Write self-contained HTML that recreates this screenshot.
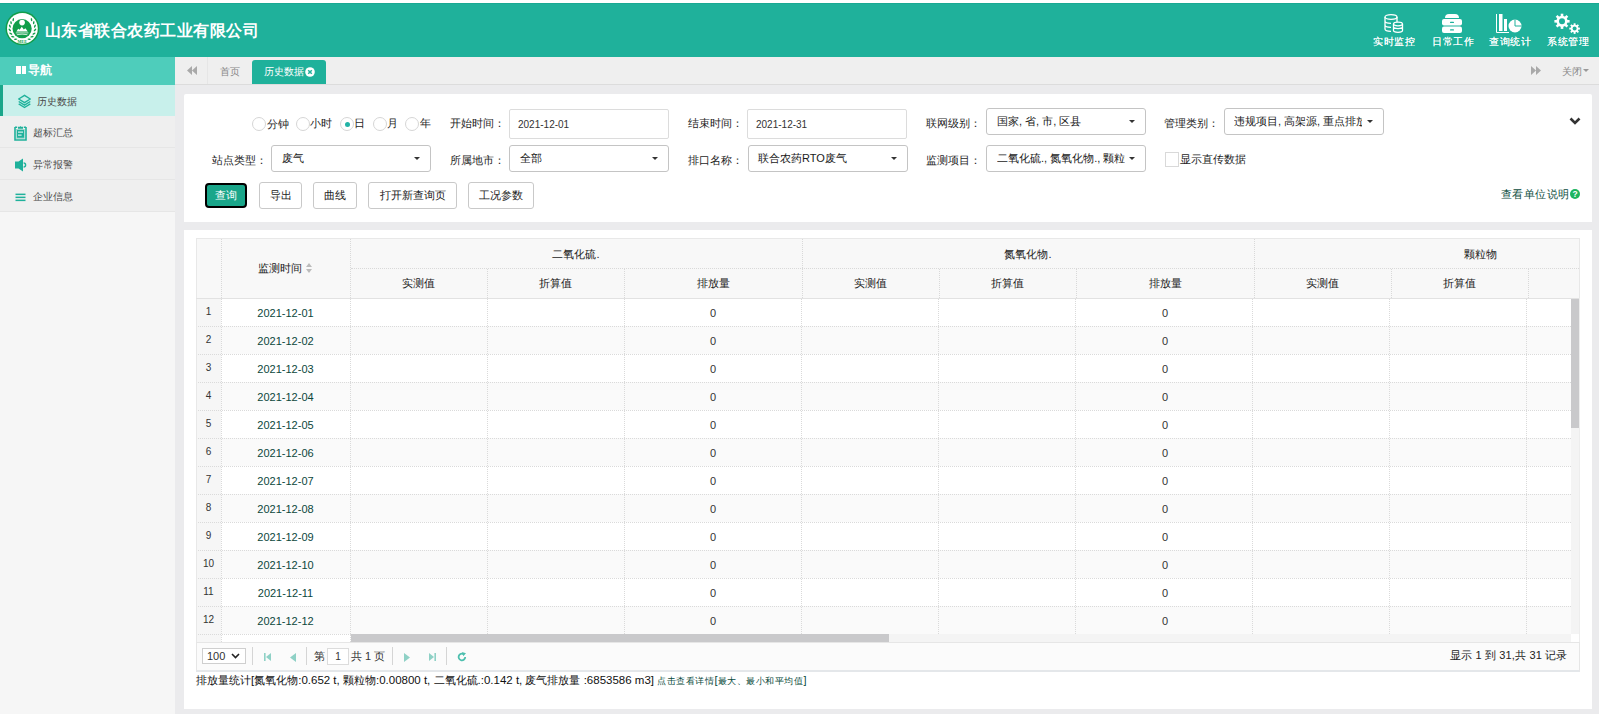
<!DOCTYPE html>
<html><head><meta charset="utf-8">
<style>
*{box-sizing:border-box;margin:0;padding:0}
html,body{width:1599px;height:714px;overflow:hidden;background:#fff;font-family:"Liberation Sans",sans-serif;font-size:12px;color:#333}
.a{position:absolute}
#hdr{left:0;top:3px;width:1599px;height:54px;background:#1fb19b;border-top:1px solid #19a993}
#title{left:44.5px;top:20.5px;font-size:16px;letter-spacing:0.5px;font-weight:bold;color:#fff;line-height:20px;white-space:nowrap}
.tb{color:#fff;font-size:10px;letter-spacing:0.5px;line-height:12px;white-space:nowrap;text-shadow:0 0 0.4px #fff}
#side{left:0;top:57px;width:175px;height:657px;background:#f6f6f6}
#navh{left:0;top:57px;width:175px;height:28px;background:#4ecdbb;color:#fff;font-weight:bold}
.item{left:0;width:175px;height:32px;background:#efefef;border-bottom:1px solid #e6e6e6;color:#555;font-size:11px}
#tabs{left:175px;top:57px;width:1424px;height:28px;background:#efefef;border-bottom:1px solid #dcdcdc}
#content{left:175px;top:85px;width:1424px;height:629px;background:#ebebed}
.panel{background:#fff;border-radius:3px}
.lbl{white-space:nowrap;font-size:11px;color:#1e1e1e;line-height:14px}
.inp{background:#fff;border:1px solid #dcdcdc;border-radius:2px}
.sel{background:#fff;border:1px solid #c4c4c4;border-radius:3px}
.selt{font-size:11px;line-height:14px;white-space:nowrap;color:#1a1a1a}
.caret{width:0;height:0;border-left:3.5px solid transparent;border-right:3.5px solid transparent;border-top:3.5px solid #333}
.btn{border:1px solid #c9c9c9;border-radius:3px;background:#fff;height:27px;text-align:center;line-height:25px;font-size:11px;color:#222}
.radio{width:14px;height:14px;border:1px solid #d6d6d6;border-radius:50%;background:#fff}
</style></head><body>

<!-- header -->
<div id="hdr" class="a"></div>
<svg class="a" style="left:5px;top:11px" width="35" height="35" viewBox="0 0 35 35">
  <circle cx="17.4" cy="17.4" r="16.9" fill="#119d4a"/>
  <circle cx="17.4" cy="17.4" r="15.4" fill="#fff"/>
  <ellipse cx="10.67" cy="28.17" rx="1.7" ry="0.75" transform="rotate(177.0 10.67 28.17)" fill="#119d4a"/><ellipse cx="7.82" cy="25.73" rx="1.7" ry="0.75" transform="rotate(194.0 7.82 25.73)" fill="#119d4a"/><ellipse cx="5.80" cy="22.57" rx="1.7" ry="0.75" transform="rotate(211.0 5.80 22.57)" fill="#119d4a"/><ellipse cx="4.79" cy="18.95" rx="1.7" ry="0.75" transform="rotate(228.0 4.79 18.95)" fill="#119d4a"/><ellipse cx="4.89" cy="15.19" rx="1.7" ry="0.75" transform="rotate(-115.0 4.89 15.19)" fill="#119d4a"/><ellipse cx="6.08" cy="11.63" rx="1.7" ry="0.75" transform="rotate(-98.0 6.08 11.63)" fill="#119d4a"/><ellipse cx="8.26" cy="8.58" rx="1.7" ry="0.75" transform="rotate(-81.0 8.26 8.58)" fill="#119d4a"/><ellipse cx="24.13" cy="28.17" rx="1.7" ry="0.75" transform="rotate(183.0 24.13 28.17)" fill="#119d4a"/><ellipse cx="26.98" cy="25.73" rx="1.7" ry="0.75" transform="rotate(166.0 26.98 25.73)" fill="#119d4a"/><ellipse cx="29.00" cy="22.57" rx="1.7" ry="0.75" transform="rotate(149.0 29.00 22.57)" fill="#119d4a"/><ellipse cx="30.01" cy="18.95" rx="1.7" ry="0.75" transform="rotate(132.0 30.01 18.95)" fill="#119d4a"/><ellipse cx="29.91" cy="15.19" rx="1.7" ry="0.75" transform="rotate(115.0 29.91 15.19)" fill="#119d4a"/><ellipse cx="28.72" cy="11.63" rx="1.7" ry="0.75" transform="rotate(98.0 28.72 11.63)" fill="#119d4a"/><ellipse cx="26.54" cy="8.58" rx="1.7" ry="0.75" transform="rotate(81.0 26.54 8.58)" fill="#119d4a"/>
  <circle cx="17.1" cy="17.7" r="9.6" fill="#119d4a"/>
  <circle cx="17.1" cy="11.6" r="2.8" fill="#fff"/>
  <path d="M11.4 20.4 L13.2 17.8 L14.6 18.8 L16.8 15.8 L18.8 18.4 L20.4 17.2 L22.8 20.4 Z" fill="#fff"/>
  <path d="M10.8 21.9 H23.4 M11.8 23.7 Q17.1 22.7 22.4 23.7" stroke="#fff" stroke-width="0.9" fill="none" opacity="0.85"/>
  <text x="17.3" y="31.8" font-size="4.2" fill="#119d4a" text-anchor="middle" font-weight="bold" font-family="Liberation Serif">MEE</text>
</svg>
<div id="title" class="a">山东省联合农药工业有限公司</div>

<!-- header right icons -->
<svg class="a" style="left:1384px;top:14px" width="20" height="19" viewBox="0 0 20 19">
  <g fill="none" stroke="#fff" stroke-width="1.3">
    <ellipse cx="7" cy="3" rx="6" ry="2.3"/>
    <path d="M1 3 V15 Q1 17.3 7 17.3 M1 7 Q1 9.3 7 9.3 M1 11 Q1 13.3 7 13.3 M13 3 V8"/>
    <ellipse cx="14" cy="10" rx="4.5" ry="1.8"/>
    <path d="M9.5 10 V16.5 Q9.5 18.3 14 18.3 Q18.5 18.3 18.5 16.5 V10 M9.5 12.8 Q9.5 14.6 14 14.6 Q18.5 14.6 18.5 12.8"/>
  </g>
</svg>
<div class="a tb" style="left:1373px;top:35.5px">实时监控</div>
<svg class="a" style="left:1442px;top:14px" width="20" height="19" viewBox="0 0 20 19">
  <path d="M3 4 Q3 0 7 0 H13 Q17 0 17 4 Z" fill="#fff"/>
  <rect x="0" y="5" width="20" height="6.5" rx="2" fill="#fff"/>
  <rect x="0" y="12.5" width="20" height="6.5" rx="2" fill="#fff"/>
  <rect x="8" y="7.8" width="4" height="1.2" rx="0.6" fill="#1fb19b"/>
  <rect x="8" y="15.3" width="4" height="1.2" rx="0.6" fill="#1fb19b"/>
</svg>
<div class="a tb" style="left:1432px;top:35.5px">日常工作</div>
<svg class="a" style="left:1496px;top:14px" width="26" height="19" viewBox="0 0 26 19">
  <path d="M0.5 0 V18.5 H13" stroke="#fff" stroke-width="1" fill="none"/>
  <rect x="3" y="0" width="3.5" height="17" fill="#fff"/>
  <rect x="8" y="5" width="3" height="12" fill="#fff"/>
  <circle cx="19" cy="12" r="6.5" fill="#fff"/>
  <path d="M19 5.5 V12 H25.5" stroke="#1fb19b" stroke-width="1" fill="none"/>
</svg>
<div class="a tb" style="left:1489px;top:35.5px">查询统计</div>
<svg class="a" style="left:1554px;top:13px" width="28" height="21" viewBox="0 0 28 21"><circle cx="8" cy="8.3" r="5.6" fill="#fff"/><rect x="6.7" y="0.7000000000000011" width="2.6" height="7.6" fill="#fff" transform="rotate(0.0 8 8.3)"/><rect x="6.7" y="0.7000000000000011" width="2.6" height="7.6" fill="#fff" transform="rotate(45.0 8 8.3)"/><rect x="6.7" y="0.7000000000000011" width="2.6" height="7.6" fill="#fff" transform="rotate(90.0 8 8.3)"/><rect x="6.7" y="0.7000000000000011" width="2.6" height="7.6" fill="#fff" transform="rotate(135.0 8 8.3)"/><rect x="6.7" y="0.7000000000000011" width="2.6" height="7.6" fill="#fff" transform="rotate(180.0 8 8.3)"/><rect x="6.7" y="0.7000000000000011" width="2.6" height="7.6" fill="#fff" transform="rotate(225.0 8 8.3)"/><rect x="6.7" y="0.7000000000000011" width="2.6" height="7.6" fill="#fff" transform="rotate(270.0 8 8.3)"/><rect x="6.7" y="0.7000000000000011" width="2.6" height="7.6" fill="#fff" transform="rotate(315.0 8 8.3)"/><circle cx="8" cy="8.3" r="3.0" fill="#1fb19b"/><circle cx="20.6" cy="15.6" r="3.8" fill="#fff"/><rect x="19.650000000000002" y="10.3" width="1.9" height="5.3" fill="#fff" transform="rotate(0.0 20.6 15.6)"/><rect x="19.650000000000002" y="10.3" width="1.9" height="5.3" fill="#fff" transform="rotate(45.0 20.6 15.6)"/><rect x="19.650000000000002" y="10.3" width="1.9" height="5.3" fill="#fff" transform="rotate(90.0 20.6 15.6)"/><rect x="19.650000000000002" y="10.3" width="1.9" height="5.3" fill="#fff" transform="rotate(135.0 20.6 15.6)"/><rect x="19.650000000000002" y="10.3" width="1.9" height="5.3" fill="#fff" transform="rotate(180.0 20.6 15.6)"/><rect x="19.650000000000002" y="10.3" width="1.9" height="5.3" fill="#fff" transform="rotate(225.0 20.6 15.6)"/><rect x="19.650000000000002" y="10.3" width="1.9" height="5.3" fill="#fff" transform="rotate(270.0 20.6 15.6)"/><rect x="19.650000000000002" y="10.3" width="1.9" height="5.3" fill="#fff" transform="rotate(315.0 20.6 15.6)"/><circle cx="20.6" cy="15.6" r="2.0" fill="#1fb19b"/></svg>
<div class="a tb" style="left:1547px;top:35.5px">系统管理</div>

<!-- sidebar -->
<div id="side" class="a"></div>
<div id="navh" class="a"><div class="a" style="left:16px;top:9px;width:5px;height:8px;background:#fff"></div><div class="a" style="left:21.5px;top:9px;width:4.5px;height:8px;background:#fff"></div><div class="a" style="left:28px;top:6px;font-size:12px;line-height:14px">导航</div></div>
<div class="a item" style="top:85px;height:31px;background:#c8f0eb;border-bottom:none;border-left:3px solid #1aa68a"></div>
<div class="a" style="left:37px;top:95px;font-size:10px;color:#4a4a4a;line-height:14px">历史数据</div>
<div class="a item" style="top:116px"></div>
<div class="a" style="left:33px;top:126px;font-size:10px;color:#4a4a4a;line-height:14px">超标汇总</div>
<div class="a item" style="top:148px"></div>
<div class="a" style="left:33px;top:158px;font-size:10px;color:#4a4a4a;line-height:14px">异常报警</div>
<div class="a item" style="top:180px"></div>
<div class="a" style="left:33px;top:190px;font-size:10px;color:#4a4a4a;line-height:14px">企业信息</div>

<svg class="a" style="left:17px;top:94px" width="15" height="15" viewBox="0 0 15 15"><g fill="none" stroke="#1fb19b" stroke-width="1.4" stroke-linejoin="round"><path d="M7.5 1.3 L13.3 5 L7.5 8.7 L1.7 5 Z"/><path d="M1.7 7.5 L7.5 11.2 L13.3 7.5"/><path d="M1.7 9.8 L7.5 13.5 L13.3 9.8"/></g></svg>
<svg class="a" style="left:14px;top:126px" width="13" height="15" viewBox="0 0 13 15"><path d="M1 1.3 H3.2 M9.8 1.3 H12 M1 1 V14 H12 V1" fill="none" stroke="#1fb19b" stroke-width="1.6"/><path d="M4 0.8 H9 V2.8 H4 Z M6.5 0 L7.3 1 H5.7 Z" fill="#1fb19b"/><rect x="3" y="3.8" width="7" height="8" fill="#1fb19b"/><rect x="2.6" y="3.4" width="7.8" height="9" fill="none" stroke="#7ccfc1" stroke-width="0.6"/><rect x="4" y="5.6" width="5" height="1" fill="#fff"/><rect x="4" y="8.6" width="3.6" height="1" fill="#fff"/></svg>
<svg class="a" style="left:15px;top:158px" width="12" height="14" viewBox="0 0 12 14"><path d="M0 3.5 H3.5 L8 0.5 V13.5 L3.5 10.5 H0 Z" fill="#1fb19b"/><path d="M8.6 5 A2 2 0 0 1 8.6 9" fill="none" stroke="#1fb19b" stroke-width="1.4"/></svg>
<svg class="a" style="left:15px;top:193px" width="11" height="9" viewBox="0 0 11 9"><rect x="0.5" y="0.6" width="10" height="1.5" fill="#1fb19b"/><rect x="0.5" y="3.6" width="10" height="1.5" fill="#1fb19b"/><rect x="0.5" y="6.6" width="10" height="1.5" fill="#1fb19b"/></svg>
<!-- tabs -->
<div id="tabs" class="a"></div>
<div class="a" style="left:207px;top:57px;width:1px;height:27px;background:#e6e6e6"></div>
<svg class="a" style="left:187px;top:66px" width="10" height="9" viewBox="0 0 10 9"><path d="M5 0 L0 4.5 L5 9 Z M10 0 L5 4.5 L10 9 Z" fill="#a9a9a9"/></svg>
<div class="a" style="left:220px;top:65px;font-size:10px;line-height:13px;color:#888">首页</div>
<div class="a" style="left:252px;top:60px;width:74px;height:24px;background:#1fb19b;border-radius:3px 3px 0 0"></div>
<div class="a" style="left:264px;top:65px;font-size:10px;line-height:13px;color:#fff">历史数据</div>
<svg class="a" style="left:305px;top:66.5px" width="10" height="10" viewBox="0 0 10 10"><circle cx="5" cy="5" r="4.8" fill="#fff"/><path d="M3.2 3.2 L6.8 6.8 M6.8 3.2 L3.2 6.8" stroke="#1fb19b" stroke-width="1.5"/></svg>
<svg class="a" style="left:1531px;top:66px" width="10" height="9" viewBox="0 0 10 9"><path d="M0 0 L5 4.5 L0 9 Z M5 0 L10 4.5 L5 9 Z" fill="#a9a9a9"/></svg>
<div class="a" style="left:1562px;top:64.5px;font-size:10px;line-height:13px;color:#888">关闭</div>
<div class="a caret" style="left:1583px;top:69px;border-top-color:#999;border-left-width:3.5px;border-right-width:3.5px"></div>
<div id="content" class="a"></div>

<!-- panel 1 -->
<div class="a panel" style="left:184px;top:94px;width:1408px;height:128px;border-radius:2px 2px 0 0"></div>
<div class="a radio" style="left:252px;top:117px"></div>
<div class="a lbl" style="left:267px;top:116.5px">分钟</div>
<div class="a radio" style="left:296px;top:117px"></div>
<div class="a lbl" style="left:310px;top:116px">小时</div>
<div class="a radio" style="left:340px;top:117px"></div>
<div class="a" style="left:344.5px;top:121.5px;width:5px;height:5px;border-radius:50%;background:#22b3a6"></div>
<div class="a lbl" style="left:354px;top:116px">日</div>
<div class="a radio" style="left:373px;top:117px"></div>
<div class="a lbl" style="left:387px;top:116px">月</div>
<div class="a radio" style="left:405px;top:117px"></div>
<div class="a lbl" style="left:420px;top:116px">年</div>

<div class="a lbl" style="left:450px;top:116px">开始时间：</div>
<div class="a inp" style="left:509px;top:109px;width:160px;height:30px"></div>
<div class="a" style="left:518px;top:118px;font-size:10px;line-height:13px;color:#333">2021-12-01</div>
<div class="a lbl" style="left:688px;top:116px">结束时间：</div>
<div class="a inp" style="left:747px;top:109px;width:160px;height:30px"></div>
<div class="a" style="left:756px;top:118px;font-size:10px;line-height:13px;color:#333">2021-12-31</div>
<div class="a lbl" style="left:926px;top:116px">联网级别：</div>
<div class="a sel" style="left:986px;top:108px;width:160px;height:27px"></div>
<div class="a selt" style="left:997px;top:114px">国家, 省, 市, 区县</div>
<div class="a caret" style="left:1129px;top:120px"></div>
<div class="a lbl" style="left:1164px;top:116px">管理类别：</div>
<div class="a sel" style="left:1224px;top:108px;width:160px;height:27px"></div>
<div class="a selt" style="left:1234px;top:114px;width:128px;overflow:hidden">违规项目, 高架源, 重点排放</div>
<div class="a caret" style="left:1367px;top:120px"></div>
<svg class="a" style="left:1569px;top:116.5px" width="12" height="9" viewBox="0 0 12 9"><path d="M1.5 1.5 L6 6 L10.5 1.5" stroke="#333" stroke-width="2.6" fill="none"/></svg>

<div class="a lbl" style="left:212px;top:153px">站点类型：</div>
<div class="a sel" style="left:271px;top:145px;width:160px;height:27px"></div>
<div class="a selt" style="left:282px;top:151px">废气</div>
<div class="a caret" style="left:414px;top:157px"></div>
<div class="a lbl" style="left:450px;top:153px">所属地市：</div>
<div class="a sel" style="left:509px;top:145px;width:160px;height:27px"></div>
<div class="a selt" style="left:520px;top:151px">全部</div>
<div class="a caret" style="left:652px;top:157px"></div>
<div class="a lbl" style="left:688px;top:153px">排口名称：</div>
<div class="a sel" style="left:748px;top:145px;width:160px;height:27px"></div>
<div class="a selt" style="left:758px;top:151px">联合农药RTO废气</div>
<div class="a caret" style="left:891px;top:157px"></div>
<div class="a lbl" style="left:926px;top:153px">监测项目：</div>
<div class="a sel" style="left:986px;top:145px;width:160px;height:27px"></div>
<div class="a selt" style="left:997px;top:151px;width:128px;overflow:hidden">二氧化硫., 氮氧化物., 颗粒物</div>
<div class="a caret" style="left:1129px;top:157px"></div>
<div class="a" style="left:1165px;top:152px;width:14px;height:15px;border:1px solid #d9d9d9;background:#fff"></div>
<div class="a lbl" style="left:1179.5px;top:151.5px;font-size:11.2px;letter-spacing:0.2px">显示直传数据</div>

<div class="a" style="left:205px;top:183px;width:42px;height:25px;border:2px solid #000;border-radius:4px;background:#1aa68a;color:#fff;font-size:11px;line-height:21px;text-align:center">查询</div>
<div class="a btn" style="left:259px;top:182px;width:43px">导出</div>
<div class="a btn" style="left:313px;top:182px;width:44px">曲线</div>
<div class="a btn" style="left:368px;top:182px;width:89px">打开新查询页</div>
<div class="a btn" style="left:468px;top:182px;width:66px">工况参数</div>
<div class="a" style="left:1501px;top:186.5px;font-size:11px;letter-spacing:0.4px;line-height:14px;color:#0d4d40;white-space:nowrap">查看单位说明</div>
<svg class="a" style="left:1570px;top:189px" width="10" height="10" viewBox="0 0 10 10"><circle cx="5" cy="5" r="5" fill="#1db55e"/><text x="5" y="8.4" font-size="8.5" font-weight="bold" fill="#fff" text-anchor="middle" font-family="Liberation Sans">?</text></svg>

<!-- panel 2 -->
<div class="a panel" style="left:184px;top:230px;width:1408px;height:479px;border-radius:0"></div>
<div class="a" style="left:196px;top:238px;width:1384px;height:60px;background:#f8f8f8;border:1px solid #e8e8e8;border-bottom:none"></div>
<div class="a" style="left:221px;top:239px;width:0;height:59px;border-left:1px dotted #d9d9d9"></div>
<div class="a" style="left:350px;top:239px;width:0;height:59px;border-left:1px dotted #d9d9d9"></div>
<div class="a" style="left:802px;top:239px;width:0;height:59px;border-left:1px dotted #d9d9d9"></div>
<div class="a" style="left:1254px;top:239px;width:0;height:59px;border-left:1px dotted #d9d9d9"></div>
<div class="a" style="left:351px;top:268px;width:1228px;height:0;border-top:1px dotted #d9d9d9"></div>
<div class="a" style="left:487px;top:269px;width:0;height:29px;border-left:1px dotted #d9d9d9"></div>
<div class="a" style="left:624px;top:269px;width:0;height:29px;border-left:1px dotted #d9d9d9"></div>
<div class="a" style="left:939px;top:269px;width:0;height:29px;border-left:1px dotted #d9d9d9"></div>
<div class="a" style="left:1076px;top:269px;width:0;height:29px;border-left:1px dotted #d9d9d9"></div>
<div class="a" style="left:1391px;top:269px;width:0;height:29px;border-left:1px dotted #d9d9d9"></div>
<div class="a" style="left:1528px;top:269px;width:0;height:29px;border-left:1px dotted #d9d9d9"></div>
<div class="a" style="left:221px;top:261px;width:129px;font-size:11px;line-height:14px;color:#222;white-space:nowrap;text-align:center">监测时间 <span style="display:inline-block;width:8px"></span></div>
<svg class="a" style="left:306px;top:263px" width="6" height="10" viewBox="0 0 6 10"><path d="M3 0 L6 4 H0 Z M0 6 H6 L3 10 Z" fill="#bbb"/></svg>
<div class="a" style="left:350px;top:247px;width:452px;font-size:11px;line-height:14px;color:#222;white-space:nowrap;text-align:center">二氧化硫.</div>
<div class="a" style="left:802px;top:247px;width:452px;font-size:11px;line-height:14px;color:#222;white-space:nowrap;text-align:center">氮氧化物.</div>
<div class="a" style="left:1254px;top:247px;width:452px;font-size:11px;line-height:14px;color:#222;white-space:nowrap;text-align:center">颗粒物</div>
<div class="a" style="left:350px;top:276px;width:137px;font-size:11px;line-height:14px;color:#222;white-space:nowrap;text-align:center">实测值</div>
<div class="a" style="left:487px;top:276px;width:137px;font-size:11px;line-height:14px;color:#222;white-space:nowrap;text-align:center">折算值</div>
<div class="a" style="left:624px;top:276px;width:178px;font-size:11px;line-height:14px;color:#222;white-space:nowrap;text-align:center">排放量</div>
<div class="a" style="left:802px;top:276px;width:137px;font-size:11px;line-height:14px;color:#222;white-space:nowrap;text-align:center">实测值</div>
<div class="a" style="left:939px;top:276px;width:137px;font-size:11px;line-height:14px;color:#222;white-space:nowrap;text-align:center">折算值</div>
<div class="a" style="left:1076px;top:276px;width:178px;font-size:11px;line-height:14px;color:#222;white-space:nowrap;text-align:center">排放量</div>
<div class="a" style="left:1254px;top:276px;width:137px;font-size:11px;line-height:14px;color:#222;white-space:nowrap;text-align:center">实测值</div>
<div class="a" style="left:1391px;top:276px;width:137px;font-size:11px;line-height:14px;color:#222;white-space:nowrap;text-align:center">折算值</div>
<div class="a" style="left:196px;top:638px;width:1px;height:4px;background:#e3e3e3"></div><div class="a" style="left:196px;top:298px;width:1383px;height:344px;overflow:hidden;background:#fff">
<div class="a" style="left:0;top:0px;width:1383px;height:28px;background:#fff"></div>
<div class="a" style="left:0;top:28px;width:1383px;height:28px;background:#fafafa"></div>
<div class="a" style="left:0;top:56px;width:1383px;height:28px;background:#fff"></div>
<div class="a" style="left:0;top:84px;width:1383px;height:28px;background:#fafafa"></div>
<div class="a" style="left:0;top:112px;width:1383px;height:28px;background:#fff"></div>
<div class="a" style="left:0;top:140px;width:1383px;height:28px;background:#fafafa"></div>
<div class="a" style="left:0;top:168px;width:1383px;height:28px;background:#fff"></div>
<div class="a" style="left:0;top:196px;width:1383px;height:28px;background:#fafafa"></div>
<div class="a" style="left:0;top:224px;width:1383px;height:28px;background:#fff"></div>
<div class="a" style="left:0;top:252px;width:1383px;height:28px;background:#fafafa"></div>
<div class="a" style="left:0;top:280px;width:1383px;height:28px;background:#fff"></div>
<div class="a" style="left:0;top:308px;width:1383px;height:28px;background:#fafafa"></div>
<div class="a" style="left:0;top:336px;width:1383px;height:28px;background:#fff"></div>
<div class="a" style="left:0;top:0;width:25px;height:344px;background:#f6f6f6"></div>
<div class="a" style="left:0;top:28px;width:1375px;height:0;border-top:1px dotted #dadada"></div>
<div class="a" style="left:0;top:56px;width:1375px;height:0;border-top:1px dotted #dadada"></div>
<div class="a" style="left:0;top:84px;width:1375px;height:0;border-top:1px dotted #dadada"></div>
<div class="a" style="left:0;top:112px;width:1375px;height:0;border-top:1px dotted #dadada"></div>
<div class="a" style="left:0;top:140px;width:1375px;height:0;border-top:1px dotted #dadada"></div>
<div class="a" style="left:0;top:168px;width:1375px;height:0;border-top:1px dotted #dadada"></div>
<div class="a" style="left:0;top:196px;width:1375px;height:0;border-top:1px dotted #dadada"></div>
<div class="a" style="left:0;top:224px;width:1375px;height:0;border-top:1px dotted #dadada"></div>
<div class="a" style="left:0;top:252px;width:1375px;height:0;border-top:1px dotted #dadada"></div>
<div class="a" style="left:0;top:280px;width:1375px;height:0;border-top:1px dotted #dadada"></div>
<div class="a" style="left:0;top:308px;width:1375px;height:0;border-top:1px dotted #dadada"></div>
<div class="a" style="left:0;top:336px;width:1375px;height:0;border-top:1px dotted #dadada"></div>
<div class="a" style="left:0;top:364px;width:1375px;height:0;border-top:1px dotted #dadada"></div>
<div class="a" style="left:25px;top:0;width:0;height:344px;border-left:1px dotted #dadada"></div>
<div class="a" style="left:154px;top:0;width:0;height:344px;border-left:1px dotted #dadada"></div>
<div class="a" style="left:291px;top:0;width:0;height:344px;border-left:1px dotted #dadada"></div>
<div class="a" style="left:428px;top:0;width:0;height:344px;border-left:1px dotted #dadada"></div>
<div class="a" style="left:605px;top:0;width:0;height:344px;border-left:1px dotted #dadada"></div>
<div class="a" style="left:742px;top:0;width:0;height:344px;border-left:1px dotted #dadada"></div>
<div class="a" style="left:879px;top:0;width:0;height:344px;border-left:1px dotted #dadada"></div>
<div class="a" style="left:1056px;top:0;width:0;height:344px;border-left:1px dotted #dadada"></div>
<div class="a" style="left:1193px;top:0;width:0;height:344px;border-left:1px dotted #dadada"></div>
<div class="a" style="left:1330px;top:0;width:0;height:344px;border-left:1px dotted #dadada"></div>
<div class="a" style="left:0;top:7px;width:25px;text-align:center;font-size:10px;line-height:14px;white-space:nowrap;color:#333">1</div>
<div class="a" style="left:25px;top:8px;width:129px;text-align:center;font-size:11px;line-height:14px;white-space:nowrap;color:#0b473c">2021-12-01</div>
<div class="a" style="left:428px;top:8px;width:178px;text-align:center;font-size:11px;line-height:14px;white-space:nowrap;color:#333">0</div>
<div class="a" style="left:880px;top:8px;width:178px;text-align:center;font-size:11px;line-height:14px;white-space:nowrap;color:#333">0</div>
<div class="a" style="left:0;top:35px;width:25px;text-align:center;font-size:10px;line-height:14px;white-space:nowrap;color:#333">2</div>
<div class="a" style="left:25px;top:36px;width:129px;text-align:center;font-size:11px;line-height:14px;white-space:nowrap;color:#0b473c">2021-12-02</div>
<div class="a" style="left:428px;top:36px;width:178px;text-align:center;font-size:11px;line-height:14px;white-space:nowrap;color:#333">0</div>
<div class="a" style="left:880px;top:36px;width:178px;text-align:center;font-size:11px;line-height:14px;white-space:nowrap;color:#333">0</div>
<div class="a" style="left:0;top:63px;width:25px;text-align:center;font-size:10px;line-height:14px;white-space:nowrap;color:#333">3</div>
<div class="a" style="left:25px;top:64px;width:129px;text-align:center;font-size:11px;line-height:14px;white-space:nowrap;color:#0b473c">2021-12-03</div>
<div class="a" style="left:428px;top:64px;width:178px;text-align:center;font-size:11px;line-height:14px;white-space:nowrap;color:#333">0</div>
<div class="a" style="left:880px;top:64px;width:178px;text-align:center;font-size:11px;line-height:14px;white-space:nowrap;color:#333">0</div>
<div class="a" style="left:0;top:91px;width:25px;text-align:center;font-size:10px;line-height:14px;white-space:nowrap;color:#333">4</div>
<div class="a" style="left:25px;top:92px;width:129px;text-align:center;font-size:11px;line-height:14px;white-space:nowrap;color:#0b473c">2021-12-04</div>
<div class="a" style="left:428px;top:92px;width:178px;text-align:center;font-size:11px;line-height:14px;white-space:nowrap;color:#333">0</div>
<div class="a" style="left:880px;top:92px;width:178px;text-align:center;font-size:11px;line-height:14px;white-space:nowrap;color:#333">0</div>
<div class="a" style="left:0;top:119px;width:25px;text-align:center;font-size:10px;line-height:14px;white-space:nowrap;color:#333">5</div>
<div class="a" style="left:25px;top:120px;width:129px;text-align:center;font-size:11px;line-height:14px;white-space:nowrap;color:#0b473c">2021-12-05</div>
<div class="a" style="left:428px;top:120px;width:178px;text-align:center;font-size:11px;line-height:14px;white-space:nowrap;color:#333">0</div>
<div class="a" style="left:880px;top:120px;width:178px;text-align:center;font-size:11px;line-height:14px;white-space:nowrap;color:#333">0</div>
<div class="a" style="left:0;top:147px;width:25px;text-align:center;font-size:10px;line-height:14px;white-space:nowrap;color:#333">6</div>
<div class="a" style="left:25px;top:148px;width:129px;text-align:center;font-size:11px;line-height:14px;white-space:nowrap;color:#0b473c">2021-12-06</div>
<div class="a" style="left:428px;top:148px;width:178px;text-align:center;font-size:11px;line-height:14px;white-space:nowrap;color:#333">0</div>
<div class="a" style="left:880px;top:148px;width:178px;text-align:center;font-size:11px;line-height:14px;white-space:nowrap;color:#333">0</div>
<div class="a" style="left:0;top:175px;width:25px;text-align:center;font-size:10px;line-height:14px;white-space:nowrap;color:#333">7</div>
<div class="a" style="left:25px;top:176px;width:129px;text-align:center;font-size:11px;line-height:14px;white-space:nowrap;color:#0b473c">2021-12-07</div>
<div class="a" style="left:428px;top:176px;width:178px;text-align:center;font-size:11px;line-height:14px;white-space:nowrap;color:#333">0</div>
<div class="a" style="left:880px;top:176px;width:178px;text-align:center;font-size:11px;line-height:14px;white-space:nowrap;color:#333">0</div>
<div class="a" style="left:0;top:203px;width:25px;text-align:center;font-size:10px;line-height:14px;white-space:nowrap;color:#333">8</div>
<div class="a" style="left:25px;top:204px;width:129px;text-align:center;font-size:11px;line-height:14px;white-space:nowrap;color:#0b473c">2021-12-08</div>
<div class="a" style="left:428px;top:204px;width:178px;text-align:center;font-size:11px;line-height:14px;white-space:nowrap;color:#333">0</div>
<div class="a" style="left:880px;top:204px;width:178px;text-align:center;font-size:11px;line-height:14px;white-space:nowrap;color:#333">0</div>
<div class="a" style="left:0;top:231px;width:25px;text-align:center;font-size:10px;line-height:14px;white-space:nowrap;color:#333">9</div>
<div class="a" style="left:25px;top:232px;width:129px;text-align:center;font-size:11px;line-height:14px;white-space:nowrap;color:#0b473c">2021-12-09</div>
<div class="a" style="left:428px;top:232px;width:178px;text-align:center;font-size:11px;line-height:14px;white-space:nowrap;color:#333">0</div>
<div class="a" style="left:880px;top:232px;width:178px;text-align:center;font-size:11px;line-height:14px;white-space:nowrap;color:#333">0</div>
<div class="a" style="left:0;top:259px;width:25px;text-align:center;font-size:10px;line-height:14px;white-space:nowrap;color:#333">10</div>
<div class="a" style="left:25px;top:260px;width:129px;text-align:center;font-size:11px;line-height:14px;white-space:nowrap;color:#0b473c">2021-12-10</div>
<div class="a" style="left:428px;top:260px;width:178px;text-align:center;font-size:11px;line-height:14px;white-space:nowrap;color:#333">0</div>
<div class="a" style="left:880px;top:260px;width:178px;text-align:center;font-size:11px;line-height:14px;white-space:nowrap;color:#333">0</div>
<div class="a" style="left:0;top:287px;width:25px;text-align:center;font-size:10px;line-height:14px;white-space:nowrap;color:#333">11</div>
<div class="a" style="left:25px;top:288px;width:129px;text-align:center;font-size:11px;line-height:14px;white-space:nowrap;color:#0b473c">2021-12-11</div>
<div class="a" style="left:428px;top:288px;width:178px;text-align:center;font-size:11px;line-height:14px;white-space:nowrap;color:#333">0</div>
<div class="a" style="left:880px;top:288px;width:178px;text-align:center;font-size:11px;line-height:14px;white-space:nowrap;color:#333">0</div>
<div class="a" style="left:0;top:315px;width:25px;text-align:center;font-size:10px;line-height:14px;white-space:nowrap;color:#333">12</div>
<div class="a" style="left:25px;top:316px;width:129px;text-align:center;font-size:11px;line-height:14px;white-space:nowrap;color:#0b473c">2021-12-12</div>
<div class="a" style="left:428px;top:316px;width:178px;text-align:center;font-size:11px;line-height:14px;white-space:nowrap;color:#333">0</div>
<div class="a" style="left:880px;top:316px;width:178px;text-align:center;font-size:11px;line-height:14px;white-space:nowrap;color:#333">0</div>
<div class="a" style="left:0;top:343px;width:25px;text-align:center;font-size:10px;line-height:14px;white-space:nowrap;color:#333">13</div>
<div class="a" style="left:25px;top:344px;width:129px;text-align:center;font-size:11px;line-height:14px;white-space:nowrap;color:#0b473c">2021-12-13</div>
<div class="a" style="left:428px;top:344px;width:178px;text-align:center;font-size:11px;line-height:14px;white-space:nowrap;color:#333">0</div>
<div class="a" style="left:880px;top:344px;width:178px;text-align:center;font-size:11px;line-height:14px;white-space:nowrap;color:#333">0</div>
<div class="a" style="left:1375px;top:0;width:8px;height:336px;background:#f4f4f4"></div>
<div class="a" style="left:1375px;top:1px;width:8px;height:129px;background:#c9c9cb"></div>
<div class="a" style="left:155px;top:336px;width:1220px;height:8px;background:#f4f4f4"></div>
<div class="a" style="left:155px;top:336px;width:538px;height:8px;background:#c9c9cb"></div>
<div class="a" style="left:1375px;top:336px;width:8px;height:8px;background:#fff"></div>
</div>
<div class="a" style="left:196px;top:298px;width:1px;height:344px;background:#e8e8e8"></div><div class="a" style="left:196px;top:298px;width:1384px;height:1px;background:#e2e2e2"></div><div class="a" style="left:1579px;top:298px;width:1px;height:344px;background:#ededed"></div>
<div class="a" style="left:196px;top:642px;width:1384px;height:30px;background:#fbfbfb;border:1px solid #e6e6e6;border-bottom:2px solid #e4e7ea;border-radius:0"></div>
<div class="a" style="left:202px;top:648px;width:44px;height:16px;border:1px solid #cfcfcf;background:#fff"></div>
<div class="a" style="left:207px;top:649px;font-size:11px;line-height:14px;color:#333">100</div>
<svg class="a" style="left:231px;top:653px" width="9" height="6" viewBox="0 0 9 6"><path d="M1 1 L4.5 4.5 L8 1" stroke="#222" stroke-width="1.6" fill="none"/></svg>
<div class="a" style="left:252px;top:647px;width:1px;height:18px;background:#d5d5d5"></div>
<div class="a" style="left:306px;top:647px;width:1px;height:18px;background:#d5d5d5"></div>
<div class="a" style="left:392px;top:647px;width:1px;height:18px;background:#d5d5d5"></div>
<div class="a" style="left:446px;top:647px;width:1px;height:18px;background:#d5d5d5"></div>
<svg class="a" style="left:264px;top:652px" width="7" height="10" viewBox="0 0 7 10"><rect x="0" y="1" width="1.6" height="8" fill="#8fd1c6"/><path d="M7 1 L2 5 L7 9 Z" fill="#8fd1c6"/></svg>
<svg class="a" style="left:289px;top:651.5px" width="7" height="11" viewBox="0 0 7 11"><path d="M7 1 L1 5.5 L7 10 Z" fill="#8fd1c6"/></svg>
<div class="a" style="left:314px;top:649px;font-size:11px;line-height:14px;color:#333">第</div>
<div class="a" style="left:327px;top:648px;width:22px;height:17px;border:1px solid #dcdcdc;background:#fff;font-size:10px;line-height:15px;text-align:center;color:#333">1</div>
<div class="a" style="left:351px;top:649px;font-size:11px;line-height:14px;color:#333;white-space:nowrap">共 1 页</div>
<svg class="a" style="left:404px;top:651.5px" width="7" height="11" viewBox="0 0 7 11"><path d="M0 1 L6 5.5 L0 10 Z" fill="#8fd1c6"/></svg>
<svg class="a" style="left:429px;top:652px" width="7" height="10" viewBox="0 0 7 10"><path d="M0 1 L5 5 L0 9 Z" fill="#8fd1c6"/><rect x="5.4" y="1" width="1.6" height="8" fill="#8fd1c6"/></svg>
<svg class="a" style="left:457px;top:652px" width="10" height="10" viewBox="0 0 10 10"><path d="M8.2 5 A3.3 3.3 0 1 1 6.6 2.2" stroke="#4dbfae" stroke-width="1.8" fill="none"/><path d="M5 0 L9 1.2 L6.3 4.2 Z" fill="#4dbfae"/></svg>
<div class="a" style="left:1450px;top:648px;font-size:11px;letter-spacing:0.15px;line-height:14px;color:#222;white-space:nowrap">显示 1 到 31,共 31 记录</div>
<div id="stats" class="a" style="left:196px;top:673px;font-size:11.5px;line-height:14px;color:#111;white-space:nowrap"><span style="font-size:10.8px">排放量统计</span>[<span style="font-size:10.8px">氮氧化物</span>:0.652&nbsp;t,&nbsp;<span style="font-size:10.8px">颗粒物</span>:0.00800&nbsp;t,&nbsp;<span style="font-size:10.8px">二氧化硫</span>.:0.142&nbsp;t,&nbsp;<span style="font-size:10.8px">废气排放量</span>&nbsp;:6853586&nbsp;m3] <span style="color:#084a3c;font-size:11px"><span style="font-size:9px;letter-spacing:0.55px">点击查看详情</span>[<span style="font-size:9px;letter-spacing:0.55px">最大、最小和平均值</span>]</span></div>

</body></html>
